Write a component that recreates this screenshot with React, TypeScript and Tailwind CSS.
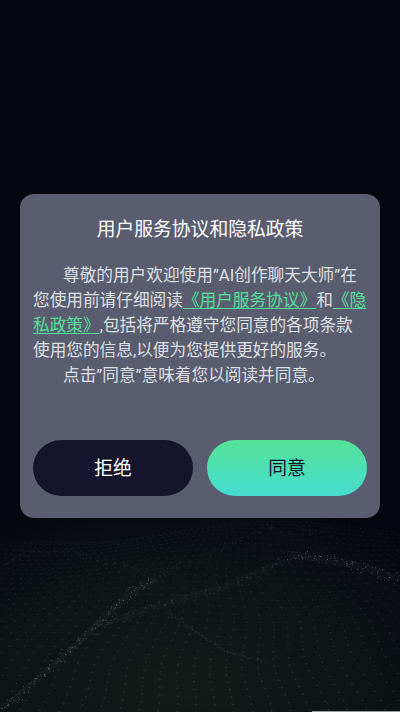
import { useMemo } from "react";

const FONT = "[font-family:Roboto,'Noto_Sans_CJK_SC',sans-serif]";

// brighter folds of the mesh: [x, y] along each one, band width w
const RIDGES: { pts: number[][]; o: number; d: number; w: number }[] = [
  { pts: [[0, 709], [20, 695], [57, 662], [93, 629], [117, 605], [137, 589], [157, 579]], o: 0.26, d: 1.7, w: 9 },
  { pts: [[100, 625], [160, 605], [217, 589], [267, 569], [293, 555]], o: 0.14, d: 2, w: 10 },
  { pts: [[293, 555], [333, 560], [365, 568], [400, 579]], o: 0.26, d: 1.6, w: 11 },
  { pts: [[0, 565], [33, 552], [73, 552], [117, 565], [157, 572], [200, 559], [240, 539], [267, 527], [290, 535], [333, 529]], o: 0.07, d: 1.5, w: 7 },
  { pts: [[167, 612], [200, 635], [227, 652], [267, 662]], o: 0.13, d: 2.4, w: 4 },
];

function scatter(pts: number[][], step: number, w: number) {
  const out: number[][] = [];
  let seed = 7;
  const rnd = () => {
    seed = (seed * 16807) % 2147483647;
    return seed / 2147483647 - 0.5;
  };
  for (let i = 0; i < pts.length - 1; i++) {
    const [x0, y0] = pts[i];
    const [x1, y1] = pts[i + 1];
    const n = Math.ceil(Math.hypot(x1 - x0, y1 - y0) / step);
    for (let k = 0; k < n; k++) {
      out.push([x0 + ((x1 - x0) * k) / n + rnd() * w, y0 + ((y1 - y0) * k) / n + rnd() * w]);
    }
  }
  return out;
}

function Mesh() {
  const grid = useMemo(() => {
    const rows: number[][][] = [];
    for (let j = 0; j < 30; j++) {
      const t = j / 29;
      const row: number[][] = [];
      for (let i = -36; i <= 36; i++) {
        const scale = 0.32 + t * 0.82;
        const x = 230 + i * 17 * scale + Math.sin(j * 0.5) * 4;
        const wave = Math.sin(x * 0.018 + t * 5) * 7 * (1 - t * 0.6) + Math.cos(x * 0.009 - t * 3) * 5;
        row.push([x, 532 + Math.pow(t, 1.35) * 184 + wave]);
      }
      rows.push(row);
    }
    return rows;
  }, []);
  const columns = grid[0].map((_, i) => grid.map((row) => row[i]));

  return (
    <svg className="absolute inset-x-0 bottom-0" width="400" height="200" viewBox="0 512 400 200">
      {[...grid, ...columns].map((line, j) => (
        <polyline
          key={j}
          points={line.map((p) => p.join(",")).join(" ")}
          fill="none"
          stroke="#6f8a78"
          strokeOpacity="0.04"
          strokeWidth="0.5"
        />
      ))}
      {grid.flat().map(([x, y], i) => (
        <circle key={i} cx={x} cy={y} r="0.8" fill="#fff" fillOpacity={0.04 + ((y - 520) / 190) * 0.08} />
      ))}
      {RIDGES.map((r, i) => (
        <g key={i}>
          <polyline
            points={r.pts.map((p) => p.join(",")).join(" ")}
            fill="none"
            stroke="#fff"
            strokeOpacity={r.o * 0.1}
            strokeWidth={r.w * 0.7}
            strokeLinejoin="round"
          />
          {scatter(r.pts, r.d, r.w).map(([x, y], k) => (
            <circle key={k} cx={x} cy={y} r="0.55" fill="#fff" fillOpacity={r.o} />
          ))}
        </g>
      ))}
    </svg>
  );
}

export default function App() {
  return (
    <div
      className={`relative flex h-[712px] w-[400px] items-center justify-center overflow-hidden bg-[#05060f] ${FONT}`}
    >
      <div className="absolute inset-x-0 bottom-0 h-[200px] bg-[radial-gradient(ellipse_80%_100%_at_45%_88%,#121a17_0%,#0e1315_60%,#05060f_100%)]" />
      <Mesh />
      <div className="absolute bottom-0 right-0 h-px w-[88px] bg-[#9a9ea3]" />

      <div className="relative flex h-[324px] w-[360px] flex-col rounded-[14px] bg-[#5a5c70] px-[13px] pb-[22px]">
        <h1 className="pt-[22px] text-center text-[18.8px] font-normal leading-[28px] text-white">
          用户服务协议和隐私政策
        </h1>
        <div className="mt-[19px] text-[16.67px] leading-[25px] text-[#dde0e3]">
          <p className="indent-[30px]">
            尊敬的用户欢迎使用”AI创作聊天大师”在您使用前请仔细阅读
            <span className="text-[#52e09a] underline underline-offset-2">《用户服务协议》</span>
            和
            <span className="text-[#52e09a] underline underline-offset-2">《隐私政策》</span>
            ,包括将严格遵守您同意的各项条款使用您的信息,以便为您提供更好的服务。
          </p>
          <p className="indent-[30px]">点击”同意”意味着您以阅读并同意。</p>
        </div>
        <div className="mt-auto flex justify-between">
          <button className="h-14 w-40 rounded-full bg-[#14152c] pt-0.5 text-[18.8px] text-white">拒绝</button>
          <button className="h-14 w-40 rounded-full bg-gradient-to-b from-[#55e296] to-[#46dccf] pt-0.5 text-[18.8px] text-[#14152c]">
            同意
          </button>
        </div>
      </div>
    </div>
  );
}
